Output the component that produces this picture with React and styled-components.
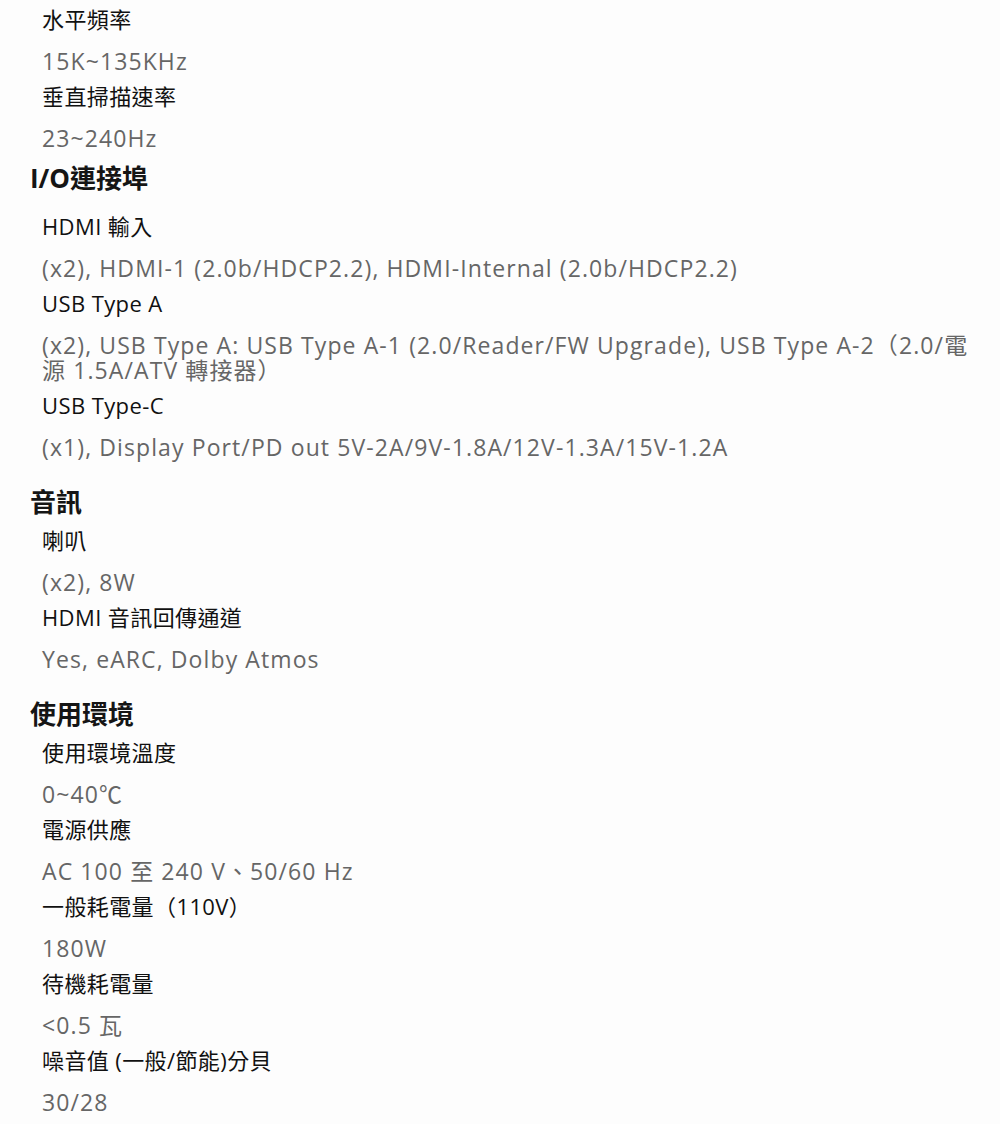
import styled, { createGlobalStyle } from 'styled-components'

const GlobalStyle = createGlobalStyle`
    body {
        margin: 0;
        background: #fdfdfd;
        font-family: "Open Sans", "Noto Sans CJK TC", sans-serif;
    }
`;

const Page = styled.main`
    display: flex;
    flex-direction: column;
    padding: 4px 24px 0 30px;
`;

const Section = styled.section`
    display: flex;
    flex-direction: column;
`;

const Heading = styled.h2`
    margin: ${(p) => (p.$tight ? '4px 0 17px' : '19px 0 7px')};
    font-size: 26px;
    line-height: 32px;
    font-weight: 700;
    color: #151515;
`;

const Item = styled.div`
    display: flex;
    flex-direction: column;
    padding-left: 12px;
    margin-bottom: 7px;
`;

const Label = styled.div`
    font-size: 22px;
    line-height: 30px;
    letter-spacing: 0.4px;
    color: #111;
`;

const Value = styled.div`
    margin-top: 15px;
    font-size: 23px;
    line-height: 25px;
    letter-spacing: 1.1px;
    color: #666;
`;

const sections = [
    {
        items: [
            ['水平頻率', '15K~135KHz'],
            ['垂直掃描速率', '23~240Hz'],
        ],
    },
    {
        title: 'I/O連接埠',
        tight: true,
        items: [
            ['HDMI 輸入', '(x2), HDMI-1 (2.0b/HDCP2.2), HDMI-Internal (2.0b/HDCP2.2)'],
            ['USB Type A', '(x2), USB Type A: USB Type A-1 (2.0/Reader/FW Upgrade), USB Type A-2（2.0/電源 1.5A/ATV 轉接器）'],
            ['USB Type-C', '(x1), Display Port/PD out 5V-2A/9V-1.8A/12V-1.3A/15V-1.2A'],
        ],
    },
    {
        title: '音訊',
        items: [
            ['喇叭', '(x2), 8W'],
            ['HDMI 音訊回傳通道', 'Yes, eARC, Dolby Atmos'],
        ],
    },
    {
        title: '使用環境',
        items: [
            ['使用環境溫度', '0~40℃'],
            ['電源供應', 'AC 100 至 240 V、50/60 Hz'],
            ['一般耗電量（110V）', '180W'],
            ['待機耗電量', '<0.5 瓦'],
            ['噪音值 (一般/節能)分貝', '30/28'],
        ],
    },
];

export const App = () => {
    return (
        <Page>
            <GlobalStyle />
            {sections.map((section, i) => (
                <Section key={i}>
                    {section.title && <Heading $tight={section.tight}>{section.title}</Heading>}
                    {section.items.map(([label, value]) => (
                        <Item key={label}>
                            <Label>{label}</Label>
                            <Value>{value}</Value>
                        </Item>
                    ))}
                </Section>
            ))}
        </Page>
    )
}

export default App
